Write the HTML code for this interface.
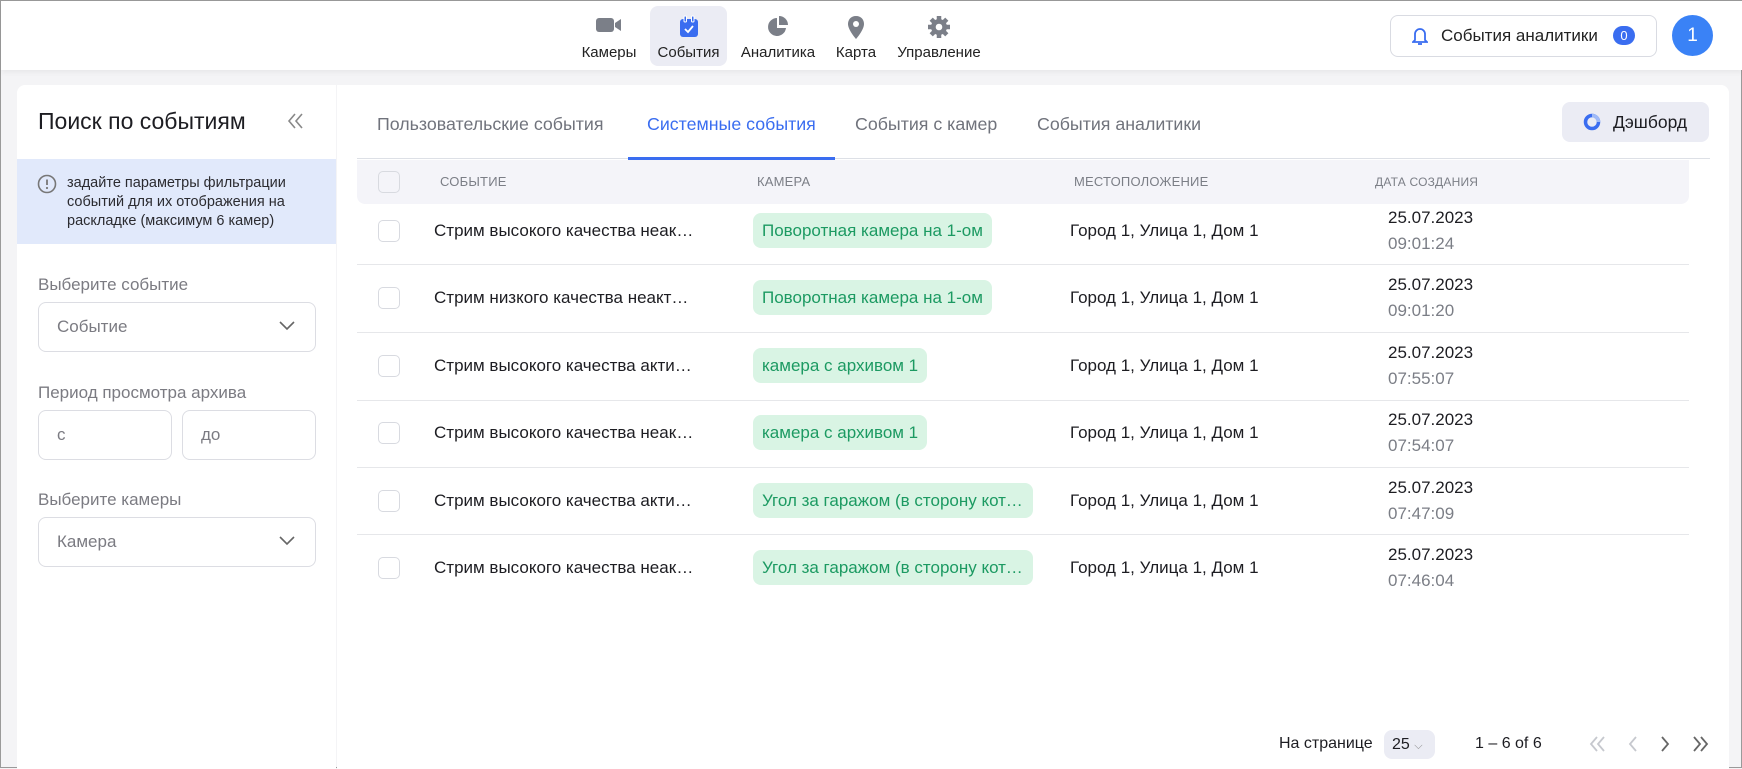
<!DOCTYPE html>
<html><head><meta charset="utf-8">
<style>
*{box-sizing:border-box;margin:0;padding:0}
body{width:1742px;height:768px;overflow:hidden;background:#f4f4f6;font-family:"Liberation Sans","Noto Sans CJK SC",sans-serif;color:#1d1d22;position:relative;border:1px solid #9a9a9a}
.abs{position:absolute}
.hdr{left:0;top:0;width:1742px;height:69px;background:#fff;box-shadow:0 2px 6px rgba(0,0,0,.06)}
.nav{top:0;height:69px;text-align:center;font-size:15px;color:#222}
.nav svg{position:absolute;left:50%;top:14px;transform:translateX(-50%)}
.nav span{position:absolute;left:0;right:0;top:43px;white-space:nowrap}
.left{left:16px;top:84px;width:319px;height:684px;background:#fff;border-radius:8px 0 0 0}
.right{left:336px;top:84px;width:1392px;height:684px;background:#fff;border-radius:0 8px 0 0}
.lbl{font-size:17px;color:#7b7b82}
.field{border:1px solid #dcdde3;border-radius:8px;background:#fff;font-size:17px;color:#7b7b82;padding-left:18px;display:flex;align-items:center}
.tab{top:113px;font-size:17.8px;color:#70737c;white-space:nowrap}
.th{top:173px;font-size:13px;color:#7b7e86;letter-spacing:.2px}
.cb{width:22px;height:22px;border:1px solid #d8dae0;border-radius:5px;background:#fff}
.ev{font-size:17px;white-space:nowrap;overflow:hidden;text-overflow:ellipsis;width:262px}
.chip{background:#d9f4e4;color:#1c9a62;font-size:17px;height:35px;line-height:35px;padding:0 9px;border-radius:8px;white-space:nowrap;overflow:hidden;text-overflow:ellipsis;max-width:280px}
.loc{font-size:17px;white-space:nowrap}
.dt{font-size:17px;line-height:26px}
.dt b{font-weight:normal;color:#7b7e86;display:block}
.sep{left:356px;width:1332px;height:1px;background:#e6e7ea}
</style></head><body>
<div class="abs hdr"></div>
<div class="abs" style="left:649px;top:5px;width:77px;height:60px;background:#ebecf4;border-radius:8px"></div>
<div class="abs nav" style="left:575px;width:66px"><svg width="28" height="20" viewBox="0 0 28 20"><rect x="1" y="3" width="18" height="14" rx="3" fill="#7b7f88"/><path d="M20 8 L26 4 V16 L20 12Z" fill="#7b7f88"/></svg><span>Камеры</span></div>
<div class="abs nav" style="left:649px;width:77px"><svg width="22" height="24" viewBox="0 0 22 24"><rect x="2" y="4" width="18" height="18" rx="3" fill="#3a6df0"/><rect x="6" y="1" width="2.5" height="6" rx="1" fill="#3a6df0" stroke="#fff" stroke-width="1"/><rect x="13.5" y="1" width="2.5" height="6" rx="1" fill="#3a6df0" stroke="#fff" stroke-width="1"/><path d="M7 14 L10 17 L15 11" stroke="#fff" stroke-width="1.8" fill="none"/></svg><span>События</span></div>
<div class="abs nav" style="left:736px;width:82px"><svg width="24" height="24" viewBox="0 0 24 24"><path d="M11 3 A9 9 0 1 0 20 13 H11Z" fill="#7b7f88"/><path d="M13 1 A9 9 0 0 1 22 10 H13Z" fill="#7b7f88"/></svg><span>Аналитика</span></div>
<div class="abs nav" style="left:832px;width:46px"><svg width="20" height="26" viewBox="0 0 20 26"><path d="M10 1 C4.5 1 2 5 2 9 C2 15 10 24 10 24 C10 24 18 15 18 9 C18 5 15.5 1 10 1Z" fill="#7b7f88"/><circle cx="10" cy="9" r="3" fill="#fff"/></svg><span>Карта</span></div>
<div class="abs nav" style="left:893px;width:90px"><svg width="24" height="24" viewBox="0 0 24 24"><g fill="#7b7f88"><circle cx="12" cy="12" r="8"/><g stroke="#7b7f88" stroke-width="4.5"><path d="M12 1V23M1 12H23M4.2 4.2L19.8 19.8M19.8 4.2L4.2 19.8"/></g></g><circle cx="12" cy="12" r="3.3" fill="#fff"/></svg><span>Управление</span></div>
<div class="abs" style="left:1389px;top:14px;width:267px;height:42px;border:1px solid #d9dbe2;border-radius:8px;background:#fff"></div>
<svg class="abs" style="left:1411px;top:25px" width="16" height="20" viewBox="0 0 16 20"><path d="M3 14 V8 A5 5 0 0 1 13 8 V14 L15 16 H1Z" fill="none" stroke="#3a6df0" stroke-width="1.8"/><path d="M6 18 H10" stroke="#3a6df0" stroke-width="1.8"/></svg>
<div class="abs" style="left:1440px;top:25px;font-size:17px;color:#222">События аналитики</div>
<div class="abs" style="left:1612px;top:25px;width:22px;height:19px;border-radius:10px;background:#3a6df0;color:#fff;font-size:13px;text-align:center;line-height:19px">0</div>
<div class="abs" style="left:1671px;top:14px;width:41px;height:41px;border-radius:50%;background:#3a82f6;color:#fff;font-size:19px;text-align:center;line-height:41px">1</div>

<div class="abs left"></div>
<div class="abs" style="left:37px;top:107px;font-size:23px;color:#1d1d22">Поиск по событиям</div>
<svg class="abs" style="left:286px;top:112px" width="18" height="16" viewBox="0 0 18 16"><path d="M8 1 L2 8 L8 15 M15 1 L9 8 L15 15" fill="none" stroke="#888" stroke-width="1.6"/></svg>
<div class="abs" style="left:16px;top:158px;width:319px;height:85px;background:#e1e9fb"></div>
<svg class="abs" style="left:36px;top:173px" width="20" height="20" viewBox="0 0 20 20"><circle cx="10" cy="10" r="8.5" fill="none" stroke="#777" stroke-width="1.6"/><path d="M10 5.5V11" stroke="#777" stroke-width="1.8"/><circle cx="10" cy="14" r="1.1" fill="#777"/></svg>
<div class="abs" style="left:66px;top:173px;font-size:14.5px;line-height:19px;color:#2b2b30;width:265px">задайте параметры фильтрации событий для их отображения на раскладке (максимум 6 камер)</div>
<div class="abs lbl" style="left:37px;top:274px">Выберите событие</div>
<div class="abs field" style="left:37px;top:301px;width:278px;height:50px">Событие</div>
<svg class="abs" style="left:278px;top:320px" width="16" height="10" viewBox="0 0 16 10"><path d="M1 1 L8 8 L15 1" fill="none" stroke="#666" stroke-width="1.6"/></svg>
<div class="abs lbl" style="left:37px;top:382px">Период просмотра архива</div>
<div class="abs field" style="left:37px;top:409px;width:134px;height:50px">с</div>
<div class="abs field" style="left:181px;top:409px;width:134px;height:50px">до</div>
<div class="abs lbl" style="left:37px;top:489px">Выберите камеры</div>
<div class="abs field" style="left:37px;top:516px;width:278px;height:50px">Камера</div>
<svg class="abs" style="left:278px;top:535px" width="16" height="10" viewBox="0 0 16 10"><path d="M1 1 L8 8 L15 1" fill="none" stroke="#666" stroke-width="1.6"/></svg>

<div class="abs right"></div>
<div class="abs tab" style="left:376px">Пользовательские события</div>
<div class="abs tab" style="left:646px;color:#3a6df0">Системные события</div>
<div class="abs tab" style="left:854px">События с камер</div>
<div class="abs tab" style="left:1036px">События аналитики</div>
<div class="abs" style="left:356px;top:157px;width:1353px;height:1px;background:#dde0e6"></div>
<div class="abs" style="left:627px;top:156px;width:207px;height:3px;background:#3a6df0"></div>
<div class="abs" style="left:1561px;top:101px;width:147px;height:40px;background:#ebecf4;border-radius:8px"></div>
<svg class="abs" style="left:1582px;top:112px" width="18" height="18" viewBox="0 0 18 18"><circle cx="9" cy="9" r="6.5" fill="none" stroke="#3a6df0" stroke-width="3.5"/><path d="M9 2.5 A6.5 6.5 0 0 1 15.5 9" fill="none" stroke="#9fbaf7" stroke-width="3.5"/></svg>
<div class="abs" style="left:1612px;top:111px;font-size:17.5px">Дэшборд</div>

<div class="abs" style="left:356px;top:159px;width:1332px;height:44px;background:#f4f4f9;border-radius:0 0 8px 8px"></div>
<div class="abs cb" style="left:377px;top:170px;background:#f4f4f9"></div>
<div class="abs th" style="left:439px">СОБЫТИЕ</div>
<div class="abs th" style="left:756px">КАМЕРА</div>
<div class="abs th" style="left:1073px">МЕСТОПОЛОЖЕНИЕ</div>
<div class="abs th" style="left:1374px;font-size:12px;top:174px">ДАТА СОЗДАНИЯ</div>

<div class="abs cb" style="left:377px;top:219px"></div><div class="abs ev" style="left:433px;top:220px">Стрим высокого качества неактивен</div><div class="abs chip" style="left:752px;top:212px">Поворотная камера на 1-ом</div><div class="abs loc" style="left:1069px;top:220px">Город 1, Улица 1, Дом 1</div><div class="abs dt" style="left:1387px;top:204px">25.07.2023<b>09:01:24</b></div>
<div class="abs sep" style="top:263px"></div>
<div class="abs cb" style="left:377px;top:286px"></div><div class="abs ev" style="left:433px;top:287px">Стрим низкого качества неактивен</div><div class="abs chip" style="left:752px;top:279px">Поворотная камера на 1-ом</div><div class="abs loc" style="left:1069px;top:287px">Город 1, Улица 1, Дом 1</div><div class="abs dt" style="left:1387px;top:271px">25.07.2023<b>09:01:20</b></div>
<div class="abs sep" style="top:331px"></div>
<div class="abs cb" style="left:377px;top:354px"></div><div class="abs ev" style="left:433px;top:355px">Стрим высокого качества активен</div><div class="abs chip" style="left:752px;top:347px">камера с архивом 1</div><div class="abs loc" style="left:1069px;top:355px">Город 1, Улица 1, Дом 1</div><div class="abs dt" style="left:1387px;top:339px">25.07.2023<b>07:55:07</b></div>
<div class="abs sep" style="top:399px"></div>
<div class="abs cb" style="left:377px;top:421px"></div><div class="abs ev" style="left:433px;top:422px">Стрим высокого качества неактивен</div><div class="abs chip" style="left:752px;top:414px">камера с архивом 1</div><div class="abs loc" style="left:1069px;top:422px">Город 1, Улица 1, Дом 1</div><div class="abs dt" style="left:1387px;top:406px">25.07.2023<b>07:54:07</b></div>
<div class="abs sep" style="top:466px"></div>
<div class="abs cb" style="left:377px;top:489px"></div><div class="abs ev" style="left:433px;top:490px">Стрим высокого качества активен</div><div class="abs chip" style="left:752px;top:482px">Угол за гаражом (в сторону котельной)</div><div class="abs loc" style="left:1069px;top:490px">Город 1, Улица 1, Дом 1</div><div class="abs dt" style="left:1387px;top:474px">25.07.2023<b>07:47:09</b></div>
<div class="abs sep" style="top:533px"></div>
<div class="abs cb" style="left:377px;top:556px"></div><div class="abs ev" style="left:433px;top:557px">Стрим высокого качества неактивен</div><div class="abs chip" style="left:752px;top:549px">Угол за гаражом (в сторону котельной)</div><div class="abs loc" style="left:1069px;top:557px">Город 1, Улица 1, Дом 1</div><div class="abs dt" style="left:1387px;top:541px">25.07.2023<b>07:46:04</b></div>

<div class="abs" style="left:1278px;top:734px;font-size:16px">На странице</div>
<div class="abs" style="left:1383px;top:729px;width:51px;height:29px;background:#ebecf4;border-radius:8px;font-size:16px;line-height:29px;padding-left:8px">25 <span style="font-size:11px;color:#888">⌵</span></div>
<div class="abs" style="left:1474px;top:734px;font-size:16px">1 – 6 of 6</div>
<svg class="abs" style="left:1588px;top:734px" width="130" height="18" viewBox="0 0 130 18"><g fill="none" stroke-width="1.8"><path d="M8 2 L2 9 L8 16 M15 2 L9 9 L15 16" stroke="#c6c8ce"/><path d="M47 2 L41 9 L47 16" stroke="#c6c8ce"/><path d="M73 2 L79 9 L73 16" stroke="#666"/><path d="M105 2 L111 9 L105 16 M112 2 L118 9 L112 16" stroke="#666"/></g></svg>
</body></html>
